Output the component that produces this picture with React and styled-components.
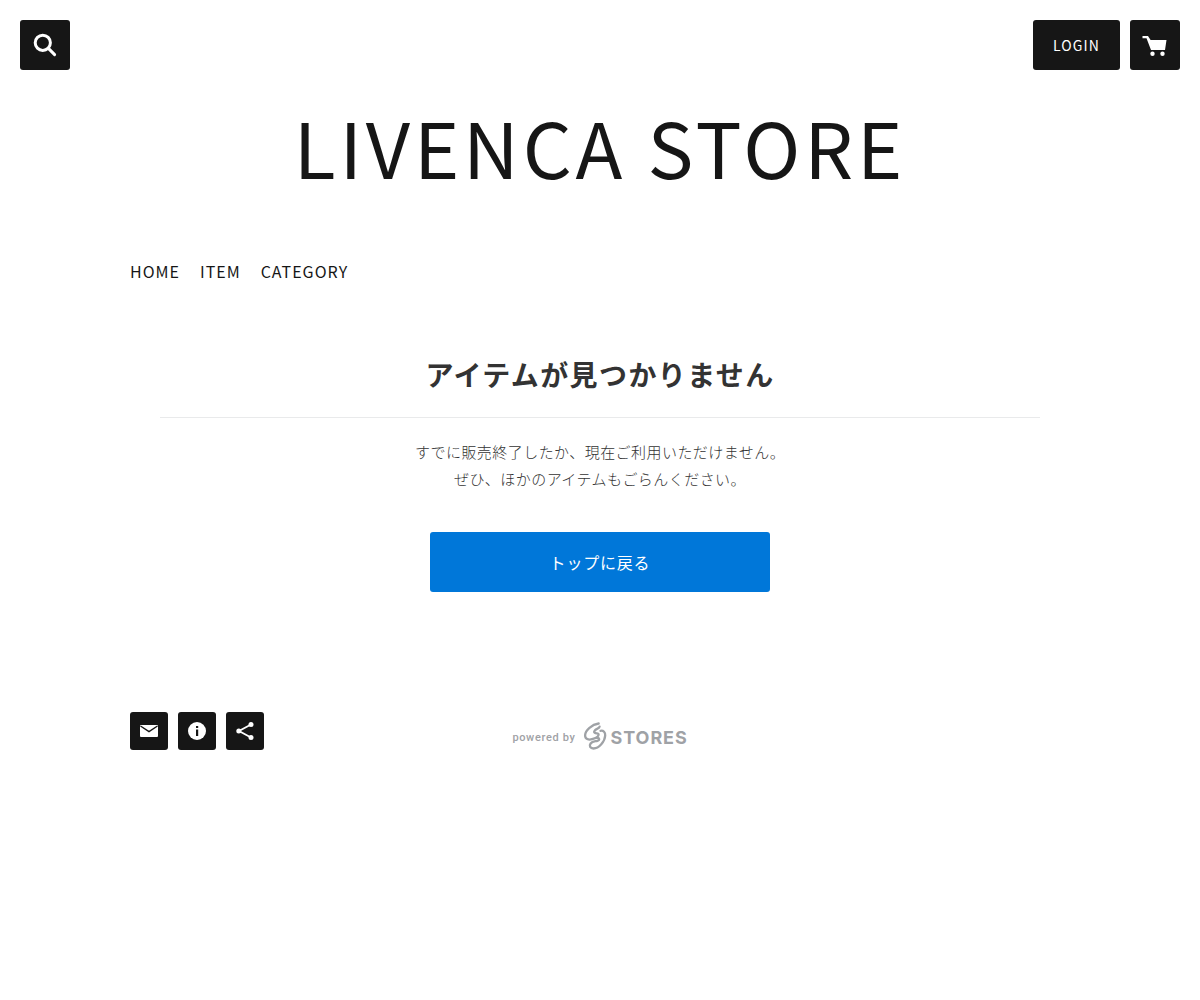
import React from "react";
import styled, { createGlobalStyle } from "styled-components";

const GlobalStyle = createGlobalStyle`
  *, *::before, *::after { box-sizing: border-box; }
  body {
    margin: 0;
    background: #fff;
    color: #161616;
    font-family: "Noto Sans CJK JP", "Noto Sans", sans-serif;
  }
  h1, h2, p { margin: 0; padding: 0; }
`;

const TopBar = styled.div`
  display: flex;
  justify-content: space-between;
  padding: 20px;
`;

const Group = styled.div`
  display: flex;
  gap: 10px;
`;

const DarkButton = styled.button`
  display: flex;
  align-items: center;
  justify-content: center;
  min-width: ${(p) => p.$size}px;
  height: ${(p) => p.$size}px;
  padding: ${(p) => (p.$text ? "0 20px" : "0")};
  border: 0;
  border-radius: 3px;
  background: #161616;
  color: #fff;
  font: 400 14px/20px "Noto Sans CJK JP", "Noto Sans", sans-serif;
  letter-spacing: 0.08em;
  cursor: pointer;
`;

const StoreName = styled.h1`
  padding: 0 20px;
  font-size: 77px;
  line-height: 112px;
  font-weight: 400;
  letter-spacing: 0.05em;
  text-align: center;
`;

const Container = styled.div`
  width: 100%;
  max-width: 980px;
  margin: 0 auto;
  padding: 0 20px;
`;

const Nav = styled.nav`
  display: flex;
  gap: 20px;
  margin-top: 57px;
`;

const NavLink = styled.a`
  color: #161616;
  font-size: 16px;
  line-height: 24px;
  letter-spacing: 1px;
  text-decoration: none;
`;

const Main = styled.main`
  display: flex;
  flex-direction: column;
  align-items: center;
  margin: 68px 30px 0;
`;

const Heading = styled.h2`
  width: 100%;
  padding-bottom: 20px;
  border-bottom: 1px solid #e9eaeb;
  color: #333;
  font-size: 28px;
  line-height: 46px;
  font-weight: 700;
  letter-spacing: 0.05em;
  text-align: center;
`;

const Message = styled.p`
  margin-top: 20px;
  color: #333;
  font-size: 15px;
  line-height: 27px;
  font-weight: 300;
  letter-spacing: 0.03em;
  text-align: center;
`;

const BackLink = styled.a`
  display: flex;
  align-items: center;
  justify-content: center;
  width: 100%;
  max-width: 340px;
  height: 60px;
  margin-top: 40px;
  border-radius: 3px;
  background: #0077d9;
  color: #fff;
  font-size: 16px;
  line-height: 24px;
  letter-spacing: 0.05em;
  text-decoration: none;
`;

const Footer = styled.footer`
  display: grid;
  grid-template-columns: 1fr auto 1fr;
  margin: 120px 0 40px;
`;

const Powered = styled.a`
  display: flex;
  align-items: center;
  align-self: end;
  height: 28px;
  color: #9fa2a6;
  text-decoration: none;
`;

const PoweredBy = styled.span`
  margin-right: 7px;
  padding-top: 3px;
  font: 500 11px/16px Roboto, sans-serif;
  letter-spacing: 0.06em;
`;

const Brand = styled.span`
  margin-left: 4px;
  padding-top: 4px;
  font: 700 18px/24px Inter, sans-serif;
  letter-spacing: 0.05em;
`;

const SearchIcon = () => (
  <svg width="24" height="24" viewBox="0 0 24 24" fill="none" stroke="#fff" strokeWidth="3" strokeLinecap="round" aria-hidden="true">
    <circle cx="9.8" cy="9.8" r="7.6" />
    <path d="M15.4 15.4 21.6 21.6" />
  </svg>
);

const CartIcon = () => (
  <svg width="26" height="22" viewBox="0 0 26 22" fill="#fff" aria-hidden="true">
    <path d="M.5 2H6l2.600 4H24.500L23 16H9L4.500 4.200H.5z" />
    <circle cx="10.500" cy="19.800" r="2.200" />
    <circle cx="20.500" cy="19.800" r="2.200" />
  </svg>
);

const MailIcon = () => (
  <svg width="18" height="12" viewBox="0 0 18 12" aria-hidden="true">
    <rect width="18" height="12" rx="1" fill="#fff" />
    <path d="M.5 1 9 6.600 17.500 1" fill="none" stroke="#161616" strokeWidth="1.400" />
  </svg>
);

const InfoIcon = () => (
  <svg width="18" height="18" viewBox="0 0 18 18" aria-hidden="true">
    <circle cx="9" cy="9" r="9" fill="#fff" />
    <path d="M8 4h2.200v2H8zM8 7.500h2.200V14H8z" fill="#161616" />
  </svg>
);

const ShareIcon = () => (
  <svg width="18" height="18" viewBox="0 0 18 18" fill="#fff" aria-hidden="true">
    <path d="M15 2.500 3 9l12 6.500" fill="none" stroke="#fff" strokeWidth="1.800" />
    <circle cx="15" cy="2.600" r="2.500" />
    <circle cx="2.800" cy="9" r="2.500" />
    <circle cx="15" cy="15.400" r="2.500" />
  </svg>
);

const StoresMark = () => (
  <svg width="24" height="28" viewBox="0 0 24 28" fill="none" stroke="#9fa2a6" strokeWidth="2.300" strokeLinecap="round" aria-hidden="true">
    <path d="M15.700 1.500C9 2.500 2.300 8 2.100 13.200 2 17 5.500 18.200 9 17.200 11.500 16.500 15.600 14.700 15.600 12.500 15.600 10.800 13.200 11.700 11.800 10.800 10.300 9.700 12 7.800 14 6.900 15.200 6.300 16.500 5.600 16.600 4.600" />
    <path d="M17.500 8.800C20.500 8.300 22.400 10.300 22.200 13.500 21.900 19.500 16 26.500 10.500 26.500 7.300 26.500 5.800 24 7.600 21.500 9.300 19.200 12 19.500 14.500 18.800 17 17.900 16.500 15.600 14 16" />
  </svg>
);

export default function App() {
  return (
    <>
      <GlobalStyle />
      <header>
        <TopBar>
          <DarkButton $size={50} aria-label="検索"><SearchIcon /></DarkButton>
          <Group>
            <DarkButton $size={50} $text>LOGIN</DarkButton>
            <DarkButton $size={50} aria-label="カート"><CartIcon /></DarkButton>
          </Group>
        </TopBar>
        <StoreName>LIVENCA STORE</StoreName>
      </header>
      <Container>
        <Nav>
          <NavLink href="#home">HOME</NavLink>
          <NavLink href="#item">ITEM</NavLink>
          <NavLink href="#category">CATEGORY</NavLink>
        </Nav>
        <Main>
          <Heading>アイテムが見つかりません</Heading>
          <Message>
            すでに販売終了したか、現在ご利用いただけません。
            <br />
            ぜひ、ほかのアイテムもごらんください。
          </Message>
          <BackLink href="#top">トップに戻る</BackLink>
        </Main>
        <Footer>
          <Group>
            <DarkButton $size={38} aria-label="お問い合わせ"><MailIcon /></DarkButton>
            <DarkButton $size={38} aria-label="ストア情報"><InfoIcon /></DarkButton>
            <DarkButton $size={38} aria-label="シェア"><ShareIcon /></DarkButton>
          </Group>
          <Powered href="#stores">
            <PoweredBy>powered by</PoweredBy>
            <StoresMark />
            <Brand>STORES</Brand>
          </Powered>
        </Footer>
      </Container>
    </>
  );
}
